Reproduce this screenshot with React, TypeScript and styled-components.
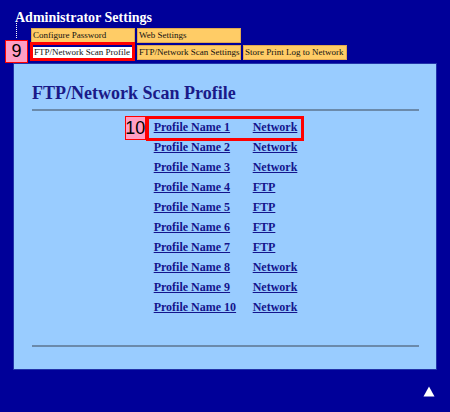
import styled, { createGlobalStyle } from 'styled-components'

const GlobalStyle = createGlobalStyle`
  html, body {
    margin: 0;
    padding: 0;
    background: #000099;
  }
  body {
    min-height: 412px;
    font-family: "Liberation Serif", "Times New Roman", serif;
  }
`

const tabs = [
  { label: 'Configure Password', row: 1, col: 2 },
  { label: 'Web Settings', row: 1, col: 3 },
  { label: 'FTP/Network Scan Profile', row: 2, col: 2, active: true },
  { label: 'FTP/Network Scan Settings', row: 2, col: 3 },
  { label: 'Store Print Log to Network', row: 2, col: 4 },
]

const profiles = [
  { name: 'Profile Name 1', type: 'Network' },
  { name: 'Profile Name 2', type: 'Network' },
  { name: 'Profile Name 3', type: 'Network' },
  { name: 'Profile Name 4', type: 'FTP' },
  { name: 'Profile Name 5', type: 'FTP' },
  { name: 'Profile Name 6', type: 'FTP' },
  { name: 'Profile Name 7', type: 'FTP' },
  { name: 'Profile Name 8', type: 'Network' },
  { name: 'Profile Name 9', type: 'Network' },
  { name: 'Profile Name 10', type: 'Network' },
]

const App = () => {
  return (
    <Page>
      <GlobalStyle />
      <Title>Administrator Settings</Title>
      <Nav>
        <TreeLine />
        {tabs.map((t) => (
          <Tab
            key={t.label}
            $active={!!t.active}
            style={{ gridRow: t.row, gridColumn: t.col }}
          >
            {t.label}
            {t.active && <Highlight $top={-5} $left={-3} $right={-2} $bottom={-3} />}
          </Tab>
        ))}
        <Badge $top={12} $left={5} $width={23} $height={23}>
          9
        </Badge>
      </Nav>
      <Panel>
        <Heading>FTP/Network Scan Profile</Heading>
        <Rule />
        <ProfileTable>
          {profiles.map((p) => (
            <ProfileRow key={p.name}>
              <ProfileLink href="#">{p.name}</ProfileLink>
              <ProfileLink href="#">{p.type}</ProfileLink>
            </ProfileRow>
          ))}
          <Badge $top={-1} $left={-29} $width={21} $height={24}>
            10
          </Badge>
          <Highlight $top={-1} $left={-8} $right={-7} $bottom={176} />
        </ProfileTable>
        <Rule $gap={28} />
      </Panel>
      <Footer>
        <TopArrow width="12" height="11" viewBox="0 0 12 11">
          <polygon points="6,0.5 11.5,10.5 0.5,10.5" fill="#ffffff" />
        </TopArrow>
      </Footer>
    </Page>
  )
}

export default App

const Page = styled.div`
  padding-top: 10px;
  width: 450px;
  min-height: 402px;
  background: #000099;
`

const Title = styled.h1`
  margin: 0 0 2px 15px;
  font-size: 14px;
  line-height: 16px;
  font-weight: bold;
  color: #ffffff;
`

const Nav = styled.div`
  position: relative;
  display: grid;
  grid-template-columns: 14px 104px 104px 104px;
  grid-template-rows: 15px 15px;
  column-gap: 2px;
  row-gap: 2px;
  padding-left: 15px;
`

const TreeLine = styled.div`
  grid-row: 1;
  grid-column: 1;
  margin: -5px 0 0 1px;
  width: 0;
  height: 15px;
  border-left: 1px dotted #ffffff;
`

const Tab = styled.div<{ $active: boolean }>`
  position: relative;
  box-sizing: border-box;
  padding: 0 1px;
  font-size: 9px;
  line-height: ${({ $active }) => ($active ? '11px' : '13px')};
  white-space: nowrap;
  color: #111111;
  background: ${({ $active }) => ($active ? '#ffffff' : '#ffcc66')};
  border: ${({ $active }) => ($active ? '2px solid #000099' : '1px solid #e0a850')};
`

const Highlight = styled.div<{ $top: number; $left: number; $right: number; $bottom: number }>`
  position: absolute;
  top: ${({ $top }) => $top}px;
  left: ${({ $left }) => $left}px;
  right: ${({ $right }) => $right}px;
  bottom: ${({ $bottom }) => $bottom}px;
  border: 3px solid #ff0000;
  pointer-events: none;
`

const Badge = styled.div<{ $top: number; $left: number; $width: number; $height: number }>`
  position: absolute;
  top: ${({ $top }) => $top}px;
  left: ${({ $left }) => $left}px;
  width: ${({ $width }) => $width}px;
  height: ${({ $height }) => $height}px;
  box-sizing: border-box;
  display: flex;
  align-items: center;
  justify-content: center;
  background: #ff9ec4;
  border: 1px solid #ff0000;
  font-family: "Liberation Sans", Arial, sans-serif;
  font-size: 18px;
  color: #000000;
`

const Panel = styled.div`
  margin: 3px 13px 0;
  padding: 18px 17px 22px 18px;
  background: #99ccff;
  border: 1px solid #2233aa;
`

const Heading = styled.h2`
  margin: 0;
  font-size: 18px;
  line-height: 22px;
  font-weight: bold;
  color: #1a1a88;
`

const Rule = styled.div<{ $gap?: number }>`
  margin-top: ${({ $gap }) => $gap ?? 5}px;
  height: 2px;
  background: #6b8aab;
`

const ProfileTable = styled.div`
  position: relative;
  width: max-content;
  margin: 6px auto 0;
`

const ProfileRow = styled.div`
  display: grid;
  grid-template-columns: 83px auto;
  column-gap: 16px;
  height: 20px;
  line-height: 20px;
`

const ProfileLink = styled.a`
  font-size: 12px;
  font-weight: bold;
  color: #14148c;
  text-decoration: underline;
  white-space: nowrap;
`

const Footer = styled.div`
  display: flex;
  justify-content: flex-end;
  padding: 16px 15px 0 0;
`

const TopArrow = styled.svg`
  display: block;
`
